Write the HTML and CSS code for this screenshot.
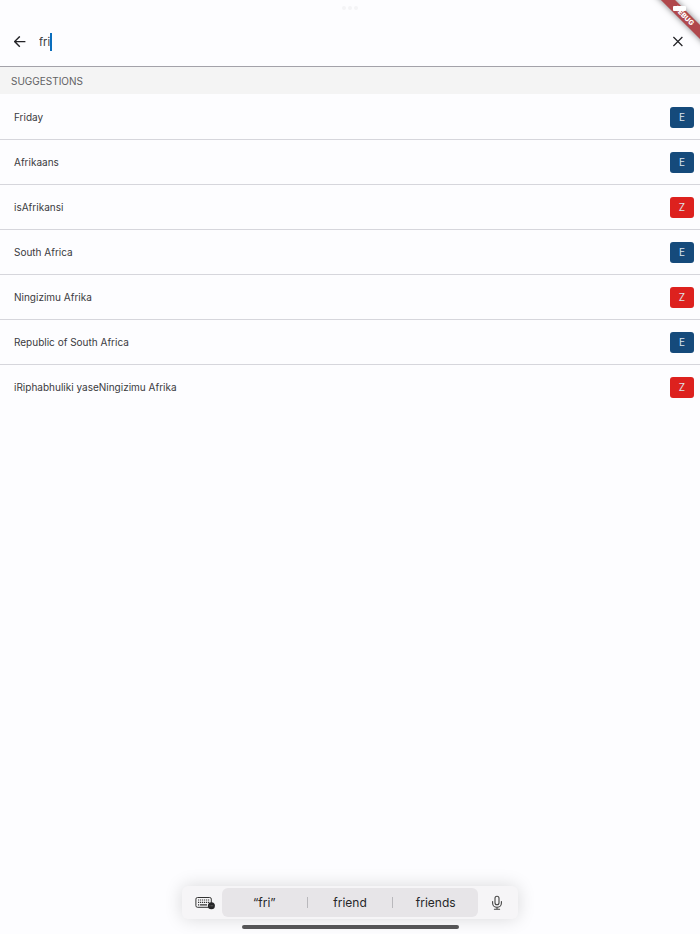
FILE: index.html
```
<!DOCTYPE html>
<html lang="en">
<head>
    <meta charset="UTF-8">
    <meta name="viewport" content="width=device-width, initial-scale=1.0">
    <title>Search</title>
    <link rel="stylesheet" href="styles.css">
</head>
<body>
    <div class="window-dots"><span></span><span></span><span></span></div>

    <div class="debug">
        <span class="debug-banner">DEBUG</span>
        <span class="battery"></span>
    </div>

    <header class="search-bar">
        <button class="icon-button" type="button" aria-label="Back">
            <svg width="12" height="12" viewBox="0 0 12 12" fill="none" stroke="currentColor" stroke-width="1.4">
                <path d="M11.4 5.6H.8M5.8 .4L.6 5.6l5.2 5.2"/>
            </svg>
        </button>
        <div class="search-field">
            <input class="search-input" type="text" value="fri" size="1" aria-label="Search">
            <span class="caret"></span>
        </div>
        <button class="icon-button" type="button" aria-label="Clear">
            <svg width="12" height="12" viewBox="0 0 12 12" fill="none" stroke="currentColor" stroke-width="1.2">
                <path d="M1.4 1l9 9M10.4 1l-9 9"/>
            </svg>
        </button>
    </header>

    <main>
        <h2 class="section-title">SUGGESTIONS</h2>
        <ul class="suggestions">
            <li><span>Friday</span><span class="badge english">E</span></li>
            <li><span>Afrikaans</span><span class="badge english">E</span></li>
            <li><span>isAfrikansi</span><span class="badge zulu">Z</span></li>
            <li><span>South Africa</span><span class="badge english">E</span></li>
            <li><span>Ningizimu Afrika</span><span class="badge zulu">Z</span></li>
            <li><span>Republic of South Africa</span><span class="badge english">E</span></li>
            <li><span>iRiphabhuliki yaseNingizimu Afrika</span><span class="badge zulu">Z</span></li>
        </ul>
    </main>

    <footer class="keyboard">
        <div class="keyboard-bar">
            <button class="key-button keyboard-key" type="button" aria-label="Keyboard">
                <svg width="20" height="14" viewBox="0 0 20 14" fill="none">
                    <rect x=".9" y="1.5" width="15.4" height="9.8" rx="1.6" stroke="#333" stroke-width="1"/>
                    <path d="M3 4h11.5M3 6.3h11.5" stroke="#333" stroke-width="1.2" stroke-dasharray="1.2 .8"/>
                    <path d="M3 8.9h1.2M5 8.9h7" stroke="#333" stroke-width="1.1"/>
                    <circle cx="16.4" cy="9.8" r="3.5" fill="#262628"/>
                    <path d="M14.5 9.8h3.8" stroke="#777" stroke-width=".9" stroke-dasharray=".9 .5"/>
                </svg>
            </button>
            <div class="predictions">
                <button type="button">“fri”</button>
                <button type="button">friend</button>
                <button type="button">friends</button>
            </div>
            <button class="key-button dictate-key" type="button" aria-label="Dictate">
                <svg width="12" height="16" viewBox="0 0 12 16" fill="none" stroke="#444" stroke-width="1.1" stroke-linecap="round">
                    <rect x="4" y="1.2" width="4" height="8.6" rx="2"/>
                    <path d="M1.6 6.5v1.4a4.4 4.4 0 0 0 8.8 0V6.5M6 12.3v2M3.4 14.3h5.2"/>
                </svg>
            </button>
        </div>
        <div class="home-indicator"></div>
    </footer>
</body>
</html>
```
FILE: styles.css
```
* {
    box-sizing: border-box;
}
body {
    margin: 0;
    min-height: 100vh;
    display: flex;
    flex-direction: column;
    position: relative;
    background-color: #fdfdff;
    color: #3a3a3e;
    font-family: Inter, sans-serif;
    font-size: 10px;
}
button {
    padding: 0;
    border: none;
    background: none;
    color: inherit;
    font: inherit;
    cursor: pointer;
}
svg {
    display: block;
}

/* Status area */
.window-dots {
    display: flex;
    justify-content: center;
    gap: 2px;
    padding-top: 6px;
    height: 17px;
}
.window-dots span {
    width: 4px;
    height: 4px;
    border-radius: 50%;
    background-color: #f4f4f6;
}
.debug {
    position: absolute;
    top: 0;
    right: 0;
    width: 56px;
    height: 56px;
    overflow: hidden;
}
.debug-banner {
    position: absolute;
    top: 11px;
    right: -24px;
    width: 80px;
    height: 10px;
    background-color: #b0484c;
    box-shadow: 0 0 6px rgba(0, 0, 0, 0.5);
    color: #fff;
    font-size: 7px;
    font-weight: 800;
    line-height: 10px;
    text-align: center;
    transform: rotate(45deg);
}
.battery {
    position: absolute;
    top: 6px;
    right: 14px;
    width: 13px;
    height: 5px;
    border-radius: 1px;
    background-color: #fff;
}

/* Search bar */
.search-bar {
    display: flex;
    align-items: center;
    height: 50px;
    padding: 0 9px;
    border-bottom: 1px solid #a3a2a9;
}
.icon-button {
    display: flex;
    align-items: center;
    justify-content: center;
    width: 26px;
    height: 26px;
    margin-left: -2px;
    color: #222226;
}
.search-field {
    flex: 1;
    display: flex;
    align-items: center;
    padding-left: 6px;
}
.search-input {
    field-sizing: content;
    padding: 0;
    border: none;
    outline: none;
    background: none;
    color: #3a3a3e;
    font: 11px Inter, sans-serif;
}
.caret {
    width: 2px;
    height: 18px;
    background-color: #0a6ebd;
}

/* Suggestions */
.section-title {
    margin: 0;
    padding: 1px 11px 0;
    background-color: #f4f4f4;
    color: #616163;
    font-size: 10px;
    font-weight: 400;
    line-height: 26px;
}
.suggestions {
    margin: 0;
    padding: 1px 0 0;
    list-style: none;
}
.suggestions li {
    display: flex;
    align-items: center;
    justify-content: space-between;
    height: 45px;
    padding: 0 6px 0 14px;
    border-bottom: 1px solid #d6d6dc;
}
.suggestions li:last-child {
    border-color: transparent;
}
.badge {
    width: 24px;
    border-radius: 3px;
    color: #dde4eb;
    line-height: 21px;
    text-align: center;
}
.english {
    background-color: #154a7b;
}
.zulu {
    background-color: #dd211e;
}

/* Keyboard shortcut bar */
.keyboard {
    display: flex;
    flex-direction: column;
    align-items: center;
    gap: 6px;
    margin-top: auto;
    padding-bottom: 5px;
}
.keyboard-bar {
    display: flex;
    width: 48%;
    height: 33px;
    padding: 2px 0;
    border-radius: 6px;
    background-color: #f6f5f7;
    box-shadow: 0 0 18px rgba(0, 0, 0, 0.15);
}
.key-button {
    display: flex;
    align-items: center;
    justify-content: center;
    flex: 0 0 40px;
}
.keyboard-key {
    padding-left: 6px;
}
.dictate-key {
    padding-right: 2px;
}
.predictions {
    flex: 1;
    display: flex;
    align-items: center;
    border-radius: 6px;
    background-color: #e7e5e8;
}
.predictions button {
    flex: 1;
    color: #262628;
    font-size: 12px;
    line-height: 11px;
}
.predictions button + button {
    border-left: 1px solid #b9b8bc;
}
.home-indicator {
    width: 31%;
    height: 4px;
    border-radius: 2px;
    background-color: #555557;
}
```
